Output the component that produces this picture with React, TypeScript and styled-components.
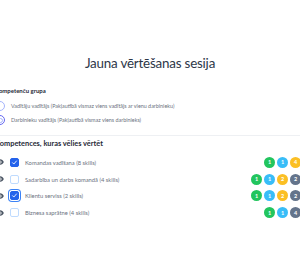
import styled, { createGlobalStyle, css } from 'styled-components';

const GlobalStyle = createGlobalStyle`
  html, body {
    margin: 0;
    padding: 0;
    background: #ffffff;
    overflow: hidden;
  }
  body {
    width: 300px;
    height: 277px;
    font-family: 'Lato', 'Open Sans', sans-serif;
  }
`;

const Page = styled.div`
  width: 300px;
  height: 277px;
  overflow: hidden;
  padding-top: 53px;
  box-sizing: border-box;
`;

const Title = styled.h1`
  margin: 0;
  text-align: center;
  font-size: 13.4px;
  line-height: 20px;
  font-weight: 400;
  color: #2d3748;
  letter-spacing: -0.2px;
`;

const Content = styled.div`
  margin: 13px -14px 0 -5px;
  display: flex;
  flex-direction: column;
`;

const GroupLabel = styled.div`
  font-size: 6px;
  line-height: 10px;
  font-weight: 700;
  color: #1f2937;
`;

const RadioList = styled.div`
  margin-top: 3px;
  display: flex;
  flex-direction: column;
`;

const RadioRow = styled.label`
  display: flex;
  align-items: center;
  gap: 6px;
  height: 14px;
  font-size: 5.4px;
  color: #6b7280;
`;

const Radio = styled.span<{ $checked?: boolean }>`
  width: 10px;
  height: 10px;
  box-sizing: border-box;
  border-radius: 50%;
  border: 1px solid #a5b4fc;
  display: flex;
  align-items: center;
  justify-content: center;
  flex-shrink: 0;
  ${({ $checked }) =>
    $checked &&
    css`
      border: 1px solid #6366f1;
      &::after {
        content: '';
        width: 5px;
        height: 5px;
        box-sizing: border-box;
        border-radius: 50%;
        border: 1px solid #a5b4fc;
      }
    `}
`;

const Divider = styled.hr`
  margin: 8px 0 0;
  border: none;
  border-top: 1px solid #eef0f3;
`;

const SectionTitle = styled.div`
  margin-top: 3px;
  font-size: 7.4px;
  line-height: 10px;
  font-weight: 700;
  color: #1f2937;
`;

const SkillList = styled.div`
  margin-top: 5px;
  display: flex;
  flex-direction: column;
`;

const SkillRow = styled.div`
  display: flex;
  align-items: center;
  height: 16.8px;
`;

const EyeIcon = styled.svg`
  width: 8px;
  height: 8px;
  flex-shrink: 0;
  margin-left: 1px;
`;

const Checkbox = styled.span<{ $checked?: boolean; $focused?: boolean }>`
  margin-left: 6px;
  width: 9px;
  height: 9px;
  box-sizing: border-box;
  border-radius: 2px;
  border: 1px solid #bfdbfe;
  display: flex;
  align-items: center;
  justify-content: center;
  flex-shrink: 0;
  ${({ $checked }) =>
    $checked &&
    css`
      background: #2563eb;
      border-color: #2563eb;
    `}
  ${({ $focused }) =>
    $focused &&
    css`
      box-shadow: 0 0 0 1px #ffffff, 0 0 0 2px #3b82f6;
    `}
`;

const SkillName = styled.span`
  margin-left: 6px;
  font-size: 5.8px;
  color: #6b7280;
  flex: 1;
`;

const Badges = styled.div`
  display: flex;
  gap: 2px;
`;

const colors = {
  green: '#22c55e',
  blue: '#38bdf8',
  yellow: '#fbbf24',
  gray: '#64748b',
};

type Tone = keyof typeof colors;

const Badge = styled.span<{ $tone: Tone }>`
  width: 11px;
  height: 11px;
  border-radius: 50%;
  background: ${({ $tone }) => colors[$tone]};
  color: #ffffff;
  font-size: 5.5px;
  font-weight: 700;
  display: flex;
  align-items: center;
  justify-content: center;
`;

const skills: {
  name: string;
  checked: boolean;
  focused?: boolean;
  badges: [Tone, number][];
}[] = [
  {
    name: 'Komandas vadīšana (8 skills)',
    checked: true,
    badges: [
      ['green', 1],
      ['blue', 1],
      ['yellow', 4],
      ['gray', 2],
    ],
  },
  {
    name: 'Sadarbība un darbs komandā (4 skills)',
    checked: false,
    badges: [
      ['green', 1],
      ['blue', 1],
      ['yellow', 2],
      ['gray', 2],
      ['gray', 1],
    ],
  },
  {
    name: 'Klientu serviss (2 skills)',
    checked: true,
    focused: true,
    badges: [
      ['green', 1],
      ['blue', 1],
      ['yellow', 2],
      ['gray', 2],
      ['gray', 1],
    ],
  },
  {
    name: 'Biznesa saprātne (4 skills)',
    checked: false,
    badges: [
      ['green', 1],
      ['blue', 1],
      ['gray', 4],
      ['gray', 1],
    ],
  },
];

const Eye = () => (
  <EyeIcon viewBox="0 0 20 20" fill="#4b5563">
    <path d="M10 12a2 2 0 100-4 2 2 0 000 4z" />
    <path
      fillRule="evenodd"
      d="M.458 10C1.732 5.943 5.522 3 10 3s8.268 2.943 9.542 7c-1.274 4.057-5.064 7-9.542 7S1.732 14.057.458 10zM14 10a4 4 0 11-8 0 4 4 0 018 0z"
      clipRule="evenodd"
    />
  </EyeIcon>
);

const Check = () => (
  <svg width="7" height="7" viewBox="0 0 16 16" fill="none">
    <path d="M3.5 8.5l3 3 6-7" stroke="#ffffff" strokeWidth="2" strokeLinecap="round" strokeLinejoin="round" />
  </svg>
);

export default function App() {
  return (
    <>
      <GlobalStyle />
      <Page>
        <Title>Jauna vērtēšanas sesija</Title>
        <Content>
          <GroupLabel>Kompetenču grupa</GroupLabel>
          <RadioList>
            <RadioRow>
              <Radio />
              Vadītāju vadītājs (Pakļautībā vismaz viens vadītājs ar vienu darbinieku)
            </RadioRow>
            <RadioRow>
              <Radio $checked />
              Darbinieku vadītājs (Pakļautībā vismaz viens darbinieks)
            </RadioRow>
          </RadioList>
          <Divider />
          <SectionTitle>Kompetences, kuras vēlies vērtēt</SectionTitle>
          <SkillList>
            {skills.map((s) => (
              <SkillRow key={s.name}>
                <Eye />
                <Checkbox $checked={s.checked} $focused={s.focused}>
                  {s.checked && <Check />}
                </Checkbox>
                <SkillName>{s.name}</SkillName>
                <Badges>
                  {s.badges.map(([tone, n], i) => (
                    <Badge key={i} $tone={tone}>
                      {n}
                    </Badge>
                  ))}
                </Badges>
              </SkillRow>
            ))}
          </SkillList>
        </Content>
      </Page>
    </>
  );
}
